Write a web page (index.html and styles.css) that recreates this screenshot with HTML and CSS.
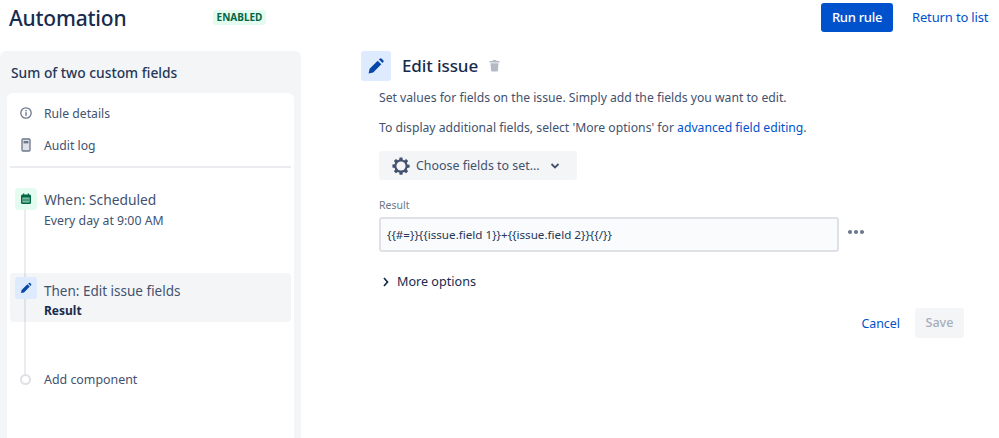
FILE: index.html
```html
<!DOCTYPE html>
<html lang="en">
<head>
<meta charset="utf-8">
<title>Automation</title>
<link rel="stylesheet" href="styles.css">
</head>
<body>
<div class="page">
  <header class="top">
    <h1 class="title">Automation</h1>
    <span class="badge">ENABLED</span>
    <button class="btn-primary">Run rule</button>
    <a class="return">Return to list</a>
  </header>
  <div class="main">
    <aside class="side">
      <h2 class="rule-name">Sum of two custom fields</h2>
      <div class="card">
        <div class="nav-row nav-first">
          <svg class="nav-icon" viewBox="0 0 14 14"><circle cx="7" cy="7" r="5.2" fill="none" stroke="#6b778c" stroke-width="1.3"/><rect x="6.3" y="6.2" width="1.4" height="3.6" fill="#6b778c"/><rect x="6.3" y="4" width="1.4" height="1.4" fill="#6b778c"/></svg>
          <span>Rule details</span>
        </div>
        <div class="nav-row">
          <svg class="nav-icon" viewBox="0 0 14 14"><rect x="3" y="1" width="8" height="12" rx="1" fill="#dfe1e6" stroke="#6b778c" stroke-width="1.3"/><rect x="4.6" y="3" width="4.8" height="2.4" fill="#6b778c"/></svg>
          <span>Audit log</span>
        </div>
        <div class="divider"></div>
        <div class="timeline">
          <div class="step step-when">
            <span class="step-icon icon-green">
              <svg viewBox="0 0 12 12" width="12" height="12"><rect x="1" y="1.5" width="10" height="9.5" rx="1.5" fill="#006644"/><rect x="2.5" y="4.6" width="7" height="4.8" fill="#b5e6d0"/><rect x="3" y="0.5" width="1.2" height="2" fill="#006644"/><rect x="7.8" y="0.5" width="1.2" height="2" fill="#006644"/><path d="M4 5v4M6 5v4M8 5v4M2.5 7h7" stroke="#006644" stroke-width=".7"/></svg>
            </span>
            <div class="step-text">
              <div class="step-title">When: Scheduled</div>
              <div class="step-sub">Every day at 9:00 AM</div>
            </div>
          </div>
          <div class="step step-then">
            <span class="step-icon icon-blue">
              <svg viewBox="0 0 12 12" width="12" height="12"><path d="M1 11l.6-3L7.4 2.2l2.4 2.4L4 10.4z M8.2 1.4l.7-.5a1 1 0 0 1 1.3.1l.9.9a1 1 0 0 1 0 1.3l-.5.7z" fill="#0747a6"/></svg>
            </span>
            <div class="step-text">
              <div class="step-title">Then: Edit issue fields</div>
              <div class="step-strong">Result</div>
            </div>
          </div>
          <div class="step step-add">
            <span class="step-dot"></span>
            <div class="step-title">Add component</div>
          </div>
        </div>
      </div>
    </aside>
    <section class="editor">
      <div class="editor-head">
        <span class="editor-icon">
          <svg viewBox="0 0 16 16" width="16" height="16"><path d="M0.6 15.4l1-4.6L9.7 2.7l3.6 3.6-8.1 8.1z M10.9 1.5l.8-.7a1.4 1.4 0 0 1 2 0l1.5 1.5a1.4 1.4 0 0 1 0 2l-.7.8z" fill="#0747a6"/></svg>
        </span>
        <h2 class="editor-title">Edit issue</h2>
        <svg class="trash" viewBox="0 0 12 14" width="11" height="13"><path d="M4.2 1h3.6l.5 1H11.5v1.6H.5V2h3.2z M1.6 4.6h8.8l-.7 8a1 1 0 0 1-1 .9H3.3a1 1 0 0 1-1-.9z" fill="#b3bac5"/></svg>
      </div>
      <div class="editor-body">
        <p class="line">Set values for fields on the issue. Simply add the fields you want to edit.</p>
        <p class="line line-2">To display additional fields, select 'More options' for <a class="link">advanced field editing</a>.</p>
        <button class="choose">
          <svg viewBox="0 0 18 18" width="18" height="18"><path d="M7.6 0.6h2.8l.4 2.2 1.4.6 1.9-1.3 2 2-1.3 1.9.6 1.4 2.2.4v2.8l-2.2.4-.6 1.4 1.3 1.9-2 2-1.9-1.3-1.4.6-.4 2.2H7.6l-.4-2.2-1.4-.6-1.9 1.3-2-2 1.3-1.9-.6-1.4-2.2-.4V7.6l2.2-.4.6-1.4-1.3-1.9 2-2 1.9 1.3 1.4-.6z" fill="#42526e"/><circle cx="9" cy="9" r="4.6" fill="#f4f5f7"/></svg>
          <span>Choose fields to set...</span>
          <svg class="chev" viewBox="0 0 10 6" width="10" height="6"><path d="M1.5 1l3.5 3.5L8.5 1" fill="none" stroke="#42526e" stroke-width="1.8"/></svg>
        </button>
        <label class="field-label">Result</label>
        <div class="field-row">
          <div class="input">{{#=}}{{issue.field 1}}+{{issue.field 2}}{{/}}</div>
          <span class="dots"><i></i><i></i><i></i></span>
        </div>
        <div class="more">
          <svg viewBox="0 0 6 10" width="6" height="10"><path d="M1 1l3.5 4L1 9" fill="none" stroke="#172b4d" stroke-width="1.7"/></svg>
          <span>More options</span>
        </div>
        <div class="actions">
          <a class="cancel">Cancel</a>
          <button class="save" disabled>Save</button>
        </div>
      </div>
    </section>
  </div>
</div>
</body>
</html>
```
FILE: styles.css
```css
* { box-sizing: border-box; }
html, body { margin: 0; padding: 0; background: #fff; }
body { font-family: "Noto Sans", "Open Sans", sans-serif; color: #172b4d; width: 999px; height: 438px; overflow: hidden; }
.page { display: flex; flex-direction: column; height: 438px; }
.top { display: flex; align-items: flex-start; height: 51px; padding: 3px 11px 0 9px; }
.title { margin: 0; width: 118px; font-size: 21px; line-height: 30px; font-weight: 500; letter-spacing: -0.2px; color: #172b4d; white-space: nowrap; }
.badge { margin: 7px 0 0 86px; width: 53px; height: 15px; background: #e3fcef; border-radius: 3px; color: #006644; font-size: 10px; line-height: 15px; font-weight: 700; text-align: center; }
.btn-primary { margin-left: auto; width: 72px; height: 29px; background: #0052cc; color: #fff; border: 0; border-radius: 3px; font: 500 13px/29px "Noto Sans", sans-serif; letter-spacing: -0.3px; padding: 0; }
.return { width: 76px; margin-left: 19px; color: #0052cc; font-size: 13px; letter-spacing: -0.15px; line-height: 29px; white-space: nowrap; }
.main { display: flex; flex: 1; min-height: 0; }
.side { width: 301px; background: #f4f5f7; border-radius: 6px 6px 0 0; padding: 0 7px; display: flex; flex-direction: column; flex: none; }
.rule-name { margin: 12px 0 10px 4px; font-size: 13.8px; line-height: 20px; font-weight: 500; color: #253858; }
.card { flex: 1; background: #fff; border-radius: 6px 6px 0 0; padding: 0 3px; }
.nav-row { display: flex; align-items: center; height: 32px; padding-left: 9px; font-size: 12.2px; color: #42526e; }
.nav-first { margin-top: 4px; }
.nav-icon { width: 14px; height: 14px; margin-right: 11px; flex: none; }
.divider { height: 2px; background: #ebecf0; margin-top: 5px; }
.timeline { position: relative; padding-top: 20px; }
.timeline::before { content: ""; position: absolute; left: 14px; top: 30px; width: 2px; height: 176px; background: #ebecf0; }
.step { display: flex; position: relative; font-size: 13px; color: #42526e; }
.step-when { height: 85px; padding-left: 5px; }
.step-then { height: 49px; padding: 4px 0 0 5px; background: rgba(9, 30, 66, 0.045); border-radius: 4px; margin-bottom: 46px; }
.step-add { align-items: center; height: 22px; padding-left: 10px; font-size: 12.4px; }
.step-add .step-title { margin-top: 2px; }
.step-icon { width: 22px; height: 22px; border-radius: 3px; display: flex; align-items: center; justify-content: center; flex: none; margin-right: 7px; position: relative; }
.icon-green { background: #e3fcef; }
.icon-blue { background: #deebff; }
.step-title { line-height: 20px; }
.step-sub { line-height: 20px; font-size: 12.3px; margin-top: 1px; }
.step-when .step-title { font-size: 13.8px; margin-top: 2px; }
.step-then .step-title { font-size: 13.5px; margin-top: 4px; }
.step-strong { font-size: 12px; line-height: 18px; font-weight: 700; color: #172b4d; margin-top: 1px; }
.step-dot { width: 11px; height: 11px; border: 2px solid #dfe1e6; border-radius: 50%; background: #fff; margin-right: 13px; flex: none; position: relative; }
.editor { flex: 1; padding-left: 60px; }
.editor-head { display: flex; align-items: center; height: 30px; }
.editor-icon { width: 30px; height: 30px; background: #deebff; border-radius: 3px; display: flex; align-items: center; justify-content: center; flex: none; }
.editor-title { margin: 0 0 0 11px; font-size: 17px; line-height: 30px; font-weight: 500; letter-spacing: -0.1px; color: #172b4d; }
.trash { margin-left: 11px; margin-top: -2px; }
.editor-body { padding-left: 18px; width: 603px; }
.line { margin: 7px 0 0; font-size: 12.18px; line-height: 20px; color: #42526e; }
.line-2 { margin-top: 10px; }
.link { color: #0052cc; }
.choose { display: flex; align-items: center; width: 198px; height: 29px; margin-top: 13px; padding: 0 0 0 13px; background: #f4f5f7; border: 0; border-radius: 3px; font: 12.4px/29px "Noto Sans", sans-serif; color: #42526e; }
.choose span { margin-left: 6px; }
.chev { margin-left: 10px; }
.field-label { display: block; margin-top: 18px; font-size: 10.5px; line-height: 14px; color: #6b778c; }
.field-row { display: flex; align-items: center; margin-top: 5px; }
.input { width: 460px; height: 35px; background: #fafbfc; border: 2px solid #dfe1e6; border-radius: 3px; padding: 0 6px; font-size: 11.65px; line-height: 31px; color: #253858; white-space: nowrap; }
.dots { display: flex; gap: 2px; margin-left: 9px; margin-top: -6px; }
.dots i { width: 4px; height: 4px; background: #6b778c; border-radius: 50%; }
.more { display: flex; align-items: center; margin-top: 20px; padding-left: 4px; font-size: 12.6px; line-height: 20px; color: #172b4d; }
.more span { margin-left: 8px; }
.actions { display: flex; align-items: center; justify-content: flex-end; margin-top: 16px; }
.cancel { color: #0052cc; font-size: 12.4px; margin-right: 15px; }
.save { width: 49px; height: 30px; background: #f4f5f7; border: 0; border-radius: 3px; color: #a5adba; font: 500 12.5px/30px "Noto Sans", sans-serif; padding: 0; }
```
